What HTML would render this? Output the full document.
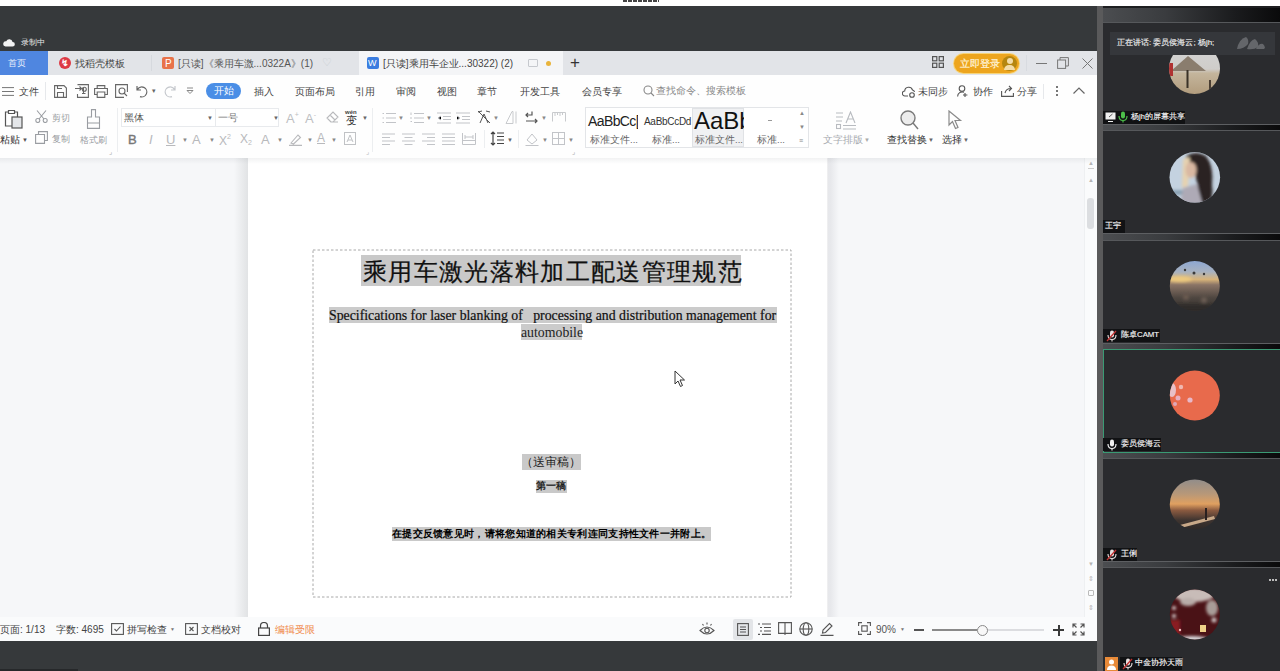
<!DOCTYPE html>
<html><head><meta charset="utf-8">
<style>
*{margin:0;padding:0;box-sizing:border-box}
html,body{width:1280px;height:671px;overflow:hidden;background:#fff;font-family:"Liberation Sans",sans-serif}
.a{position:absolute}
.t{position:absolute;white-space:nowrap;line-height:1}
#topwhite{left:0;top:0;width:1280px;height:6px;background:#fff}
#darkbar{left:0;top:6px;width:1097px;height:45px;background:#36393b}
#tabbar{left:0;top:51px;width:1097px;height:24px;background:#e2e4e8}
#menu{left:0;top:75px;width:1097px;height:29px;background:#fefefe}
#ribbon{left:0;top:104px;width:1097px;height:54px;background:#fefefe}
#docbg{left:0;top:158px;width:1085px;height:459px;background:#f6f7f9}
#page{left:248px;top:158px;width:580px;height:459px;background:#fff}
#vscroll{left:1084px;top:158px;width:13px;height:459px;background:#fafbfc;border-left:1px solid #eef0f2}
#status{left:0;top:617px;width:1097px;height:24px;background:#fafbfc}
#botbar{left:0;top:641px;width:1097px;height:30px;background:#36393b}
#side{left:1097px;top:6px;width:183px;height:665px;background:#2a2b2e}
#sidestrip{left:1097px;top:6px;width:6px;height:665px;background:#59595b}
</style></head><body>
<div class="a" id="topwhite"></div>
<div class="a" id="darkbar"></div>
<div class="a" id="tabbar"></div>
<div class="a" id="menu"></div>
<div class="a" id="ribbon"></div>
<div class="a" id="docbg"></div>
<div class="a" id="page"></div>
<div class="a" id="vscroll"></div>
<div class="a" id="status"></div>
<div class="a" id="botbar"></div>
<div class="a" style="left:0;top:669px;width:78px;height:2px;background:#26282a"></div>

<!-- top dark bar -->
<div class="a" style="left:623px;top:0px;width:36px;height:2px;background:repeating-linear-gradient(to right,#444 0 4px,#fff 4px 5px)"></div>
<svg class="a" style="left:3px;top:38px" width="12" height="9" viewBox="0 0 12 9"><path d="M2.5 8.5 H9.5 A2.3 2.3 0 0 0 9.6 3.9 A3.4 3.4 0 0 0 3.2 3.3 A2.6 2.6 0 0 0 2.5 8.5 Z" fill="#f2f2f2"/></svg>
<div class="t" style="left:21px;top:39px;font-size:8px;color:#e8e8e8">录制中</div>

<!-- tabs -->
<div class="a" style="left:0;top:51px;width:48px;height:24px;background:#4f86e0"></div>
<div class="t" style="left:8px;top:59px;font-size:9px;color:#e9f0fb">首页</div>
<div class="a" style="left:151px;top:55px;width:1px;height:16px;background:#d6d9de"></div>
<div class="a" style="left:59px;top:57px;width:12px;height:12px;border-radius:50%;background:#dd3a45"></div>
<div class="t" style="left:61px;top:59px;font-size:9px;color:#fff;font-weight:bold">&#8623;</div>
<div class="t" style="left:75px;top:59px;font-size:10px;color:#444">找稻壳模板</div>
<div class="a" style="left:162px;top:57px;width:12px;height:12px;border-radius:2px;background:#e8734a"></div>
<div class="t" style="left:165px;top:59px;font-size:10px;color:#fff">P</div>
<div class="t" style="left:178px;top:59px;font-size:10px;color:#555">[只读]《乘用车激...0322A》(1)</div>
<div class="t" style="left:322px;top:57px;font-size:11px;color:#c8ccd2">&#9825;</div>
<div class="a" style="left:359px;top:51px;width:204px;height:24px;background:#f4f5f7"></div>
<div class="a" style="left:367px;top:57px;width:12px;height:12px;border-radius:2px;background:#3b7de0"></div>
<div class="t" style="left:368px;top:59px;font-size:9px;color:#fff">W</div>
<div class="t" style="left:383px;top:59px;font-size:10px;color:#444">[只读]乘用车企业...30322) (2)</div>
<div class="a" style="left:528px;top:59px;width:10px;height:8px;border:1px solid #c6c9ce;border-radius:1px"></div>
<div class="a" style="left:546px;top:61px;width:5px;height:5px;border-radius:50%;background:#e9b43c"></div>
<div class="t" style="left:570px;top:54px;font-size:17px;color:#333">+</div>
<!-- right of tab bar -->
<svg class="a" style="left:932px;top:56px" width="12" height="12" viewBox="0 0 12 12" fill="none" stroke="#555" stroke-width="1.2"><rect x="0.6" y="0.6" width="4.2" height="4.2"/><rect x="7.2" y="0.6" width="4.2" height="4.2"/><rect x="0.6" y="7.2" width="4.2" height="4.2"/><rect x="7.2" y="7.2" width="4.2" height="4.2"/></svg>
<div class="a" style="left:954px;top:54px;width:65px;height:19px;border-radius:10px;background:#eda51e;box-shadow:0 0 0 1px #f6d47a"></div>
<div class="t" style="left:960px;top:59px;font-size:9.5px;color:#fff4da;-webkit-text-stroke:0.2px #fff4da">立即登录</div>
<div class="a" style="left:1002px;top:56px;width:15px;height:15px;border-radius:50%;background:#b5860f"></div>
<div class="a" style="left:1007px;top:58px;width:6px;height:6px;border-radius:50%;background:#f3dca8"></div>
<div class="a" style="left:1004px;top:65px;width:11px;height:5px;border-radius:5px 5px 0 0;background:#f3dca8"></div>
<div class="a" style="left:1026px;top:55px;width:1px;height:16px;background:#d8dbe0"></div>
<div class="a" style="left:1036px;top:63px;width:11px;height:1px;background:#777"></div>
<svg class="a" style="left:1057px;top:57px" width="12" height="12" viewBox="0 0 12 12" fill="none" stroke="#777" stroke-width="1"><rect x="0.6" y="3" width="8" height="8.4"/><path d="M3 3 V0.6 H11.4 V9 H8.6"/></svg>
<svg class="a" style="left:1082px;top:58px" width="11" height="11" viewBox="0 0 11 11" stroke="#777" stroke-width="1"><path d="M0.5 0.5 L10.5 10.5 M10.5 0.5 L0.5 10.5"/></svg>

<!-- menu row -->
<svg class="a" style="left:2px;top:87px" width="12" height="9" viewBox="0 0 12 9" stroke="#777" stroke-width="1"><path d="M0 0.6H12M0 4.5H12M0 8.4H12"/></svg>
<div class="t" style="left:19px;top:86.5px;font-size:10px;color:#444">文件</div>
<div class="a" style="left:45px;top:82px;width:1px;height:18px;background:#e6e8eb"></div>
<svg class="a" style="left:54px;top:85px" width="13" height="13" viewBox="0 0 13 13" fill="none" stroke="#666" stroke-width="1.1"><path d="M0.6 0.6H10L12.4 3V12.4H0.6Z M3.5 12.4V7.5H9.5V12.4 M3.5 0.6V3.5H8"/></svg>
<svg class="a" style="left:75px;top:84px" width="14" height="14" viewBox="0 0 14 14" fill="none" stroke="#666" stroke-width="1.1"><path d="M2.5 0.6H13.4V13.4H2.5V10 M0 4.5H6.5M4.5 2.5L6.5 4.5L4.5 6.5 M7 9.5H10.5M8.5 4V9"/><circle cx="9.3" cy="5.2" r="2"/></svg>
<svg class="a" style="left:94px;top:85px" width="14" height="13" viewBox="0 0 14 13" fill="none" stroke="#666" stroke-width="1.1"><path d="M3.2 3.5V0.6H10.8V3.5 M3 9.5H0.6V3.5H13.4V9.5H11 M3.2 7H10.8V12.4H3.2Z"/></svg>
<svg class="a" style="left:115px;top:84px" width="13" height="14" viewBox="0 0 13 14" fill="none" stroke="#666" stroke-width="1.1"><path d="M9 13.4H0.6V0.6H12.4V8"/><circle cx="7" cy="7" r="3"/><path d="M9 9L12 12"/></svg>
<svg class="a" style="left:136px;top:85px" width="13" height="13" viewBox="0 0 13 13" fill="none" stroke="#666" stroke-width="1.2"><path d="M1 1V5H5 M1.3 4.8A5 5 0 1 1 4 11.6"/></svg>
<div class="t" style="left:152px;top:87px;font-size:7px;color:#666">&#9662;</div>
<svg class="a" style="left:164px;top:85px" width="12" height="13" viewBox="0 0 12 13" fill="none" stroke="#c4c7cc" stroke-width="1.2"><path d="M11 1V5H7 M10.7 4.8A5 5 0 1 0 8 11.6"/></svg>
<svg class="a" style="left:186px;top:87px" width="8" height="8" viewBox="0 0 8 8" fill="none" stroke="#888" stroke-width="1"><path d="M1 1H7 M1 3.5L4 6.5L7 3.5Z"/></svg>
<div class="a" style="left:206px;top:83px;width:35px;height:16px;border-radius:8px;background:#4a8ee6"></div>
<div class="t" style="left:214px;top:86px;font-size:10px;color:#fff">开始</div>
<div class="t" style="left:254px;top:86.5px;font-size:10px;color:#444">插入</div>
<div class="t" style="left:295px;top:86.5px;font-size:9.5px;color:#444">页面布局</div>
<div class="t" style="left:355px;top:86.5px;font-size:10px;color:#444">引用</div>
<div class="t" style="left:396px;top:86.5px;font-size:10px;color:#444">审阅</div>
<div class="t" style="left:437px;top:86.5px;font-size:10px;color:#444">视图</div>
<div class="t" style="left:477px;top:86.5px;font-size:10px;color:#444">章节</div>
<div class="t" style="left:520px;top:86.5px;font-size:9.5px;color:#444">开发工具</div>
<div class="t" style="left:582px;top:86.5px;font-size:9.5px;color:#444">会员专享</div>
<svg class="a" style="left:643px;top:85px" width="12" height="12" viewBox="0 0 12 12" fill="none" stroke="#888" stroke-width="1.1"><circle cx="5" cy="5" r="4"/><path d="M8 8L11 11"/></svg>
<div class="t" style="left:656px;top:85.5px;font-size:10px;color:#888">查找命令、搜索模板</div>
<svg class="a" style="left:902px;top:85px" width="14" height="13" viewBox="0 0 14 13" fill="none" stroke="#555" stroke-width="1.1"><path d="M6 11H3A2.5 2.5 0 0 1 2.7 6A4 4 0 0 1 10.5 5A2.5 2.5 0 0 1 12.5 7"/><circle cx="10" cy="10" r="2.3"/></svg>
<div class="t" style="left:918px;top:86.5px;font-size:10px;color:#444">未同步</div>
<svg class="a" style="left:957px;top:85px" width="11" height="12" viewBox="0 0 11 12" fill="none" stroke="#555" stroke-width="1.1"><circle cx="5" cy="3.5" r="2.8"/><path d="M0.6 11.4A4.5 4.5 0 0 1 7 7.3 M8 8V12 M6 10H10.4"/></svg>
<div class="t" style="left:973px;top:86.5px;font-size:10px;color:#444">协作</div>
<svg class="a" style="left:1001px;top:85px" width="13" height="12" viewBox="0 0 13 12" fill="none" stroke="#555" stroke-width="1.1"><path d="M0.6 6V11.4H12.4V8 M4 8A6 6 0 0 1 10 3.5 M8 1L10.5 3.5L8 6"/></svg>
<div class="t" style="left:1017px;top:86.5px;font-size:10px;color:#444">分享</div>
<div class="a" style="left:1043px;top:84px;width:1px;height:15px;background:#e6e8eb"></div>
<div class="a" style="left:1056px;top:86px;width:2px;height:2px;background:#777"></div>
<div class="a" style="left:1056px;top:90px;width:2px;height:2px;background:#777"></div>
<div class="a" style="left:1056px;top:94px;width:2px;height:2px;background:#777"></div>
<svg class="a" style="left:1073px;top:87px" width="12" height="7" viewBox="0 0 12 7" fill="none" stroke="#666" stroke-width="1.2"><path d="M0.5 6.5L6 1L11.5 6.5"/></svg>

<!-- ribbon: clipboard -->
<svg class="a" style="left:4px;top:109px" width="19" height="20" viewBox="0 0 19 20" fill="none" stroke="#555" stroke-width="1.2"><path d="M4 3H1.5V17H8 M11 3H13.5V8 M4.5 1.5H10.5V4.5H4.5Z"/><rect x="8" y="8" width="10" height="11" fill="#e4e6e9"/></svg>
<div class="t" style="left:0px;top:135px;font-size:10px;color:#333">粘贴</div>
<div class="t" style="left:22px;top:137px;font-size:6px;color:#555">&#9660;</div>
<svg class="a" style="left:35px;top:110px" width="13" height="13" viewBox="0 0 13 13" fill="none" stroke="#9a9da2" stroke-width="1.1"><path d="M2 0.5L9 9 M11 0.5L4 9"/><circle cx="2.8" cy="10.5" r="2"/><circle cx="10.2" cy="10.5" r="2"/></svg>
<div class="t" style="left:52px;top:114px;font-size:9px;color:#9a9da2">剪切</div>
<svg class="a" style="left:35px;top:131px" width="13" height="13" viewBox="0 0 13 13" fill="none" stroke="#9a9da2" stroke-width="1.1"><path d="M3.5 3.5V0.6H12.4V9.5H9.5 M0.6 3.5H9.5V12.4H0.6Z"/></svg>
<div class="t" style="left:52px;top:135px;font-size:9px;color:#9a9da2">复制</div>
<svg class="a" style="left:86px;top:109px" width="15" height="20" viewBox="0 0 15 20" fill="none" stroke="#9a9da2" stroke-width="1.1"><path d="M5.5 0.6H9.5V8H13.5V19.4H1.5V8H5.5Z M1.5 14H13.5"/></svg>
<div class="t" style="left:80px;top:136px;font-size:9px;color:#9a9da2">格式刷</div>
<div class="t" style="left:109px;top:148px;font-size:7px;color:#aaa">&#8991;</div>
<div class="a" style="left:117px;top:108px;width:1px;height:44px;background:#eceef0"></div>
<!-- font -->
<div class="a" style="left:121px;top:108px;width:158px;height:19px;border:1px solid #e8eaed;background:#fff"></div>
<div class="a" style="left:215px;top:109px;width:1px;height:17px;background:#e8eaed"></div>
<div class="t" style="left:124px;top:113px;font-size:9.5px;color:#555">黑体</div>
<div class="t" style="left:207px;top:115px;font-size:6px;color:#666">&#9660;</div>
<div class="t" style="left:218px;top:113px;font-size:9.5px;color:#777">一号</div>
<div class="t" style="left:273px;top:115px;font-size:6px;color:#666">&#9660;</div>
<div class="t" style="left:286px;top:111px;font-size:13px;color:#bdbfc3;font-family:'Liberation Sans'">A<span style="font-size:7px;vertical-align:6px">+</span></div>
<div class="t" style="left:305px;top:111px;font-size:13px;color:#bdbfc3">A<span style="font-size:7px;vertical-align:6px">-</span></div>
<svg class="a" style="left:326px;top:111px" width="13" height="12" viewBox="0 0 13 12" fill="none" stroke="#b8b9bc" stroke-width="1.1"><path d="M4.5 11H12 M5 11L1 7L7 1L12 6L7 11Z M4 4L9 9"/></svg>
<div class="t" style="left:345px;top:109px;font-size:6px;color:#444;font-weight:bold">wén</div>
<div class="t" style="left:346px;top:115px;font-size:11px;color:#333">变</div>
<div class="t" style="left:362px;top:115px;font-size:6px;color:#666">&#9660;</div>
<div class="t" style="left:128px;top:133px;font-size:13px;color:#777;-webkit-text-stroke:0.4px #777">B</div>
<div class="t" style="left:149px;top:133px;font-size:13px;color:#b8b9bc;font-style:italic">I</div>
<div class="t" style="left:166px;top:133px;font-size:13px;color:#b8b9bc;text-decoration:underline">U</div>
<div class="t" style="left:182px;top:137px;font-size:6px;color:#888">&#9660;</div>
<div class="t" style="left:192px;top:133px;font-size:13px;color:#b8b9bc">A</div>
<div class="t" style="left:209px;top:137px;font-size:6px;color:#888">&#9660;</div>
<div class="t" style="left:219px;top:133px;font-size:12px;color:#b8b9bc">X<span style="font-size:7px;vertical-align:6px">2</span></div>
<div class="t" style="left:240px;top:133px;font-size:12px;color:#b8b9bc">X<span style="font-size:7px;vertical-align:-2px">2</span></div>
<div class="t" style="left:261px;top:133px;font-size:13px;color:#b8b9bc">A</div>
<div class="t" style="left:277px;top:137px;font-size:6px;color:#888">&#9660;</div>
<svg class="a" style="left:288px;top:133px" width="15" height="13" viewBox="0 0 15 13" fill="none" stroke="#b8b9bc" stroke-width="1.1"><path d="M1 12.4H14 M3 10L10 2L12.5 4.5L5.5 11Z"/></svg>
<div class="t" style="left:307px;top:137px;font-size:6px;color:#888">&#9660;</div>
<div class="t" style="left:317px;top:132px;font-size:12px;color:#b8b9bc;text-decoration:underline">A</div>
<div class="t" style="left:331px;top:137px;font-size:6px;color:#888">&#9660;</div>
<svg class="a" style="left:344px;top:132px" width="12" height="13" viewBox="0 0 12 13" fill="none" stroke="#c0c2c5" stroke-width="1"><rect x="0.5" y="0.5" width="11" height="12"/><path d="M3 10L6 3L9 10 M4 8H8"/></svg>
<div class="t" style="left:366px;top:148px;font-size:7px;color:#b8b9bc">&#8991;</div>
<div class="a" style="left:372px;top:108px;width:1px;height:44px;background:#eceef0"></div>
<!-- paragraph -->
<svg class="a" style="left:382px;top:112px" width="14" height="12" viewBox="0 0 14 12" stroke="#c2c4c8" stroke-width="1"><path d="M4 1.5H14M4 6H14M4 10.5H14 M0.5 1.5H2M0.5 6H2M0.5 10.5H2"/></svg>
<div class="t" style="left:398px;top:115px;font-size:6px;color:#888">&#9660;</div>
<svg class="a" style="left:410px;top:112px" width="14" height="12" viewBox="0 0 14 12" stroke="#c2c4c8" stroke-width="1"><path d="M4 1.5H14M4 6H14M4 10.5H14 M1 0.5V3M1 5V7M0.5 9.5H2"/></svg>
<div class="t" style="left:426px;top:115px;font-size:6px;color:#888">&#9660;</div>
<svg class="a" style="left:437px;top:112px" width="14" height="12" viewBox="0 0 14 12" stroke="#c2c4c8" stroke-width="1"><path d="M0 1H14M6 4.5H14M6 7.5H14M0 11H14 M4 4L1 6L4 8"/></svg>
<svg class="a" style="left:456px;top:112px" width="14" height="12" viewBox="0 0 14 12" stroke="#c2c4c8" stroke-width="1"><path d="M0 1H14M6 4.5H14M6 7.5H14M0 11H14 M1 4L4 6L1 8"/></svg>
<svg class="a" style="left:477px;top:110px" width="14" height="14" viewBox="0 0 14 14" fill="none" stroke="#555" stroke-width="1.2"><path d="M1 2L5 1 M13 2L9 1 M3 13L7 4L11 13 M1 1L13 13" stroke-width="1"/></svg>
<div class="t" style="left:493px;top:115px;font-size:6px;color:#888">&#9660;</div>
<svg class="a" style="left:505px;top:111px" width="13" height="13" viewBox="0 0 13 13" fill="none" stroke="#c8cacd" stroke-width="1"><path d="M1 12.5L7 0.5H8V12.5Z M11 0.5V12.5"/></svg>
<svg class="a" style="left:525px;top:111px" width="13" height="13" viewBox="0 0 13 13" fill="none" stroke="#555" stroke-width="1.2"><path d="M7 0.5V4H1 M3 2L1 4L3 6 M1 10H12 M10 8L12 10L10 12"/></svg>
<div class="t" style="left:541px;top:115px;font-size:6px;color:#888">&#9660;</div>
<svg class="a" style="left:552px;top:112px" width="14" height="10" viewBox="0 0 14 10" fill="none" stroke="#c8cacd" stroke-width="1"><path d="M0.5 0.5H13.5 M0.5 0.5V9.5 M13.5 0.5V9.5 M3 0.5V4 M5.5 0.5V3 M8 0.5V4 M10.5 0.5V3"/></svg>
<svg class="a" style="left:382px;top:133px" width="13" height="12" viewBox="0 0 13 12" stroke="#c2c4c8" stroke-width="1"><path d="M0 1H13M0 4.5H8M0 8H13M0 11.5H8"/></svg>
<svg class="a" style="left:402px;top:133px" width="13" height="12" viewBox="0 0 13 12" stroke="#c2c4c8" stroke-width="1"><path d="M0 1H13M2.5 4.5H10.5M0 8H13M2.5 11.5H10.5"/></svg>
<svg class="a" style="left:422px;top:133px" width="13" height="12" viewBox="0 0 13 12" stroke="#c2c4c8" stroke-width="1"><path d="M0 1H13M5 4.5H13M0 8H13M5 11.5H13"/></svg>
<svg class="a" style="left:442px;top:133px" width="13" height="12" viewBox="0 0 13 12" stroke="#c2c4c8" stroke-width="1"><path d="M0 1H13M0 4.5H13M0 8H13M0 11.5H13"/></svg>
<svg class="a" style="left:462px;top:133px" width="14" height="12" viewBox="0 0 14 12" fill="none" stroke="#c2c4c8" stroke-width="1"><path d="M0.5 0V11.5H13.5V0 M3 2V6M11 2V6 M3 4H11 M0.5 7.5H13.5"/></svg>
<div class="a" style="left:484px;top:130px;width:1px;height:18px;background:#eceef0"></div>
<svg class="a" style="left:490px;top:131px" width="14" height="15" viewBox="0 0 14 15" fill="none" stroke="#444" stroke-width="1.2"><path d="M3 1V14 M1 3L3 1L5 3 M1 12L3 14L5 12 M7 2H14M7 5.5H14M7 9H14M7 12.5H14"/></svg>
<div class="t" style="left:507px;top:137px;font-size:6px;color:#666">&#9660;</div>
<div class="a" style="left:518px;top:130px;width:1px;height:18px;background:#eceef0"></div>
<svg class="a" style="left:525px;top:132px" width="14" height="14" viewBox="0 0 14 14" fill="none" stroke="#c2c4c8" stroke-width="1"><path d="M2 8L7 2L12 8L7 12Z M0.5 13.5H13.5"/></svg>
<div class="t" style="left:542px;top:137px;font-size:6px;color:#888">&#9660;</div>
<svg class="a" style="left:552px;top:132px" width="13" height="13" viewBox="0 0 13 13" fill="none" stroke="#c2c4c8" stroke-width="1"><rect x="0.5" y="0.5" width="12" height="12"/><path d="M6.5 0.5V12.5M0.5 6.5H12.5"/></svg>
<div class="t" style="left:568px;top:137px;font-size:6px;color:#888">&#9660;</div>
<div class="t" style="left:572px;top:148px;font-size:7px;color:#aaa">&#8991;</div>
<!-- style gallery -->
<div class="a" style="left:585px;top:107px;width:224px;height:41px;border:1px solid #e3e5e8;background:#fff"></div>
<div class="a" style="left:692px;top:108px;width:52px;height:39px;background:#f0f1f3;border:1px solid #e0e2e5"></div>
<div class="a" style="left:586px;top:110px;width:52px;height:22px;overflow:hidden"><div class="t" style="left:2px;top:4px;font-size:14px;color:#222;letter-spacing:-0.6px">AaBbCc[</div></div>
<div class="t" style="left:590px;top:135px;font-size:9.5px;color:#666">标准文件...</div>
<div class="t" style="left:644px;top:117px;font-size:10px;color:#333;letter-spacing:-0.3px">AaBbCcDd</div>
<div class="t" style="left:652px;top:135px;font-size:9.5px;color:#666">标准...</div>
<div class="a" style="left:693px;top:109px;width:51px;height:24px;overflow:hidden"><div class="t" style="left:1px;top:0px;font-size:24px;color:#111">AaBb</div></div>
<div class="t" style="left:695px;top:135px;font-size:9.5px;color:#666">标准文件...</div>
<div class="a" style="left:768px;top:120px;width:4px;height:1px;background:#999"></div>
<div class="t" style="left:757px;top:135px;font-size:9.5px;color:#666">标准...</div>
<div class="t" style="left:799px;top:110px;font-size:6px;color:#888">&#9650;</div>
<div class="t" style="left:799px;top:124px;font-size:6px;color:#888">&#9660;</div>
<div class="t" style="left:799px;top:137px;font-size:7px;color:#888">&#8801;</div>
<!-- right tools -->
<svg class="a" style="left:836px;top:111px" width="20" height="19" viewBox="0 0 20 19" fill="none" stroke="#b8bbc0" stroke-width="1.1"><path d="M0 2H7M0 6H7M0 10H6 M10 12L14.5 1L19 12 M11.5 8H17.5 M7 14.5H20M7 18H20"/><rect x="0.5" y="13.5" width="4" height="4"/></svg>
<div class="t" style="left:823px;top:135px;font-size:10px;color:#a6a9ae">文字排版</div>
<div class="t" style="left:864px;top:137px;font-size:6px;color:#aaa">&#9660;</div>
<svg class="a" style="left:900px;top:110px" width="19" height="20" viewBox="0 0 19 20" fill="none" stroke="#7a7a7a" stroke-width="1.4"><circle cx="8" cy="8" r="7" fill="#ececec"/><path d="M13 13L18 19"/></svg>
<div class="t" style="left:887px;top:135px;font-size:10px;color:#333">查找替换</div>
<div class="t" style="left:928px;top:137px;font-size:6px;color:#666">&#9660;</div>
<svg class="a" style="left:948px;top:110px" width="15" height="20" viewBox="0 0 15 20" fill="none" stroke="#8a8a8a" stroke-width="1.2"><path d="M1 1V15L4.5 11.5L7.5 18.5L10 17.5L7 10.5H12.5Z"/></svg>
<div class="t" style="left:942px;top:135px;font-size:10px;color:#333">选择</div>
<div class="t" style="left:963px;top:137px;font-size:6px;color:#666">&#9660;</div>

<!-- document -->
<div class="a" style="left:234px;top:158px;width:14px;height:459px;background:linear-gradient(to right,rgba(40,50,50,0) 0%,rgba(40,50,50,0.05) 50%,rgba(40,50,50,0.1) 100%)"></div>
<div class="a" style="left:827px;top:158px;width:12px;height:459px;background:linear-gradient(to left,rgba(40,40,60,0) 0%,rgba(40,40,60,0.07) 70%,rgba(40,40,60,0.08) 100%)"></div>
<svg class="a" style="left:312px;top:249px" width="480" height="349"><rect x="1" y="1" width="478" height="347" fill="none" stroke="#a8a8a8" stroke-width="1" stroke-dasharray="2.5 2"/></svg>
<div class="a" style="left:361px;top:255px;width:380px;height:31px;background:#c9c9c9"></div>
<div class="t" style="left:363px;top:260px;font-size:24px;letter-spacing:1.33px;color:#111;-webkit-text-stroke:0.25px #111;font-family:'Liberation Sans',sans-serif">乘用车激光落料加工配送管理规范</div>
<div class="a" style="left:329px;top:307px;width:448px;height:16px;background:#cbcbcb"></div>
<div class="a" style="left:521px;top:324px;width:61px;height:16px;background:#cbcbcb"></div>
<div class="t" style="left:329px;top:309px;font-size:13.8px;color:#111;-webkit-text-stroke:0.2px #111;font-family:'Liberation Serif',serif;white-space:pre">Specifications for laser blanking of   processing and distribution management for</div>
<div class="t" style="left:521px;top:326px;font-size:13.8px;color:#222;font-family:'Liberation Serif',serif">automobile</div>
<div class="a" style="left:522px;top:454px;width:59px;height:16px;background:#c9c9c9"></div>
<div class="t" style="left:521px;top:456px;font-size:12px;color:#222">（送审稿）</div>
<div class="a" style="left:536px;top:480px;width:31px;height:13px;background:#c9c9c9"></div>
<div class="t" style="left:536px;top:481px;font-size:10px;color:#111;-webkit-text-stroke:0.3px #111;font-family:'Liberation Serif',serif">第一稿</div>
<div class="a" style="left:392px;top:527px;width:319px;height:14px;background:#c9c9c9"></div>
<div class="t" style="left:392px;top:529px;font-size:10px;letter-spacing:0.3px;color:#000;font-weight:bold;font-family:'Liberation Serif',serif">在提交反馈意见时，请将您知道的相关专利连同支持性文件一并附上。</div>
<svg class="a" style="left:674px;top:370px" width="12" height="18" viewBox="0 0 12 18"><path d="M1 1V14L4 11L6.5 16.5L8.5 15.5L6 10H10.5Z" fill="#fff" stroke="#333" stroke-width="1"/></svg>
<div class="a" style="left:0;top:158px;width:1097px;height:6px;background:linear-gradient(to bottom,rgba(60,70,80,0.07),rgba(60,70,80,0))"></div>
<!-- vertical scrollbar -->
<div class="t" style="left:1088px;top:160px;font-size:6px;color:#b5b5b5">&#9650;</div>
<div class="a" style="left:1088px;top:168px;width:6px;height:1px;background:#ccc"></div>
<div class="t" style="left:1088px;top:177px;font-size:6px;color:#b5b5b5">&#9650;</div>
<div class="a" style="left:1087px;top:198px;width:7px;height:31px;border-radius:3px;background:#dcdee1"></div>
<div class="t" style="left:1088px;top:561px;font-size:6px;color:#b5b5b5">&#9660;</div>
<div class="t" style="left:1088px;top:575px;font-size:7px;color:#b5b5b5">&#8661;</div>
<div class="a" style="left:1088px;top:590px;width:6px;height:6px;border:1px solid #bbb;border-radius:1px"></div>
<div class="t" style="left:1088px;top:604px;font-size:7px;color:#b5b5b5">&#8661;</div>

<!-- status bar -->
<div class="t" style="left:0px;top:625px;font-size:10px;color:#444">页面: 1/13</div>
<div class="t" style="left:56px;top:625px;font-size:10px;color:#444">字数: 4695</div>
<svg class="a" style="left:111px;top:623px" width="13" height="12" viewBox="0 0 13 12" fill="none" stroke="#555" stroke-width="1.1"><rect x="0.6" y="0.6" width="11.8" height="10.8"/><path d="M3.5 6L5.5 8L9.5 3.5"/></svg>
<div class="t" style="left:127px;top:625px;font-size:9.5px;color:#444">拼写检查</div>
<div class="t" style="left:170px;top:627px;font-size:5px;color:#777">&#9660;</div>
<svg class="a" style="left:185px;top:623px" width="13" height="12" viewBox="0 0 13 12" fill="none" stroke="#555" stroke-width="1.1"><rect x="0.6" y="0.6" width="11.8" height="10.8"/><path d="M4.5 4L8.5 8M8.5 4L4.5 8"/></svg>
<div class="t" style="left:201px;top:625px;font-size:9.5px;color:#444">文档校对</div>
<svg class="a" style="left:258px;top:622px" width="12" height="14" viewBox="0 0 12 14" fill="none" stroke="#444" stroke-width="1.2"><path d="M2.5 6V4A3.5 3.5 0 0 1 9.5 4V6"/><rect x="0.6" y="6" width="10.8" height="7.4"/></svg>
<div class="t" style="left:275px;top:625px;font-size:9.5px;color:#f08a4b">编辑受限</div>
<svg class="a" style="left:699px;top:622px" width="16" height="14" viewBox="0 0 16 14" fill="none" stroke="#555" stroke-width="1.1"><path d="M1 8.5Q8 1.5 15 8.5Q8 15.5 1 8.5Z"/><circle cx="8" cy="8.5" r="2.2"/><path d="M8 0.5V2.5M3.5 2L4.5 3.5M12.5 2L11.5 3.5"/></svg>
<div class="a" style="left:733px;top:619px;width:20px;height:21px;background:#e3e5e8;border-radius:2px"></div>
<svg class="a" style="left:737px;top:623px" width="12" height="13" viewBox="0 0 12 13" fill="none" stroke="#555" stroke-width="1.1"><rect x="0.6" y="0.6" width="10.8" height="11.8"/><path d="M3 4H9M3 6.5H9M3 9H9"/></svg>
<svg class="a" style="left:758px;top:623px" width="13" height="12" viewBox="0 0 13 12" fill="none" stroke="#555" stroke-width="1.1"><path d="M0 1H2M4 1H13 M2 4.5H4M6 4.5H13 M2 8H4M6 8H13 M0 11.4H2M4 11.4H13"/></svg>
<svg class="a" style="left:778px;top:622px" width="14" height="13" viewBox="0 0 14 13" fill="none" stroke="#555" stroke-width="1.1"><path d="M0.6 0.6H7V11.4H0.6Z M7 0.6H13.4V11.4H7 M7 11.4V13"/></svg>
<svg class="a" style="left:799px;top:622px" width="14" height="14" viewBox="0 0 14 14" fill="none" stroke="#555" stroke-width="1.1"><circle cx="7" cy="7" r="6.2"/><ellipse cx="7" cy="7" rx="2.8" ry="6.2"/><path d="M0.8 7H13.2"/></svg>
<svg class="a" style="left:820px;top:622px" width="14" height="14" viewBox="0 0 14 14" fill="none" stroke="#555" stroke-width="1.1"><path d="M0.5 13.4H13.5 M2.5 11L3 8L9.5 1.5L12 4L5.5 10.5Z"/></svg>
<svg class="a" style="left:858px;top:622px" width="13" height="13" viewBox="0 0 13 13" fill="none" stroke="#555" stroke-width="1.1"><path d="M0.6 4V0.6H4 M9 0.6H12.4V4 M12.4 9V12.4H9 M4 12.4H0.6V9"/><rect x="3.8" y="3.8" width="5.4" height="5.4"/></svg>
<div class="t" style="left:876px;top:625px;font-size:10px;color:#555">90%</div>
<div class="t" style="left:900px;top:627px;font-size:5px;color:#777">&#9660;</div>
<div class="a" style="left:914px;top:629px;width:10px;height:2px;background:#555"></div>
<div class="a" style="left:932px;top:629px;width:112px;height:1.5px;background:#dcdde0"></div>
<div class="a" style="left:932px;top:629px;width:45px;height:1.5px;background:#8a8a8a"></div>
<div class="a" style="left:976.5px;top:624.5px;width:11px;height:11px;border-radius:50%;border:1.5px solid #8a8a8a;background:#f8f8f8"></div>
<div class="a" style="left:1053px;top:629px;width:11px;height:2px;background:#3a3a3a"></div>
<div class="a" style="left:1057.5px;top:624.5px;width:2px;height:11px;background:#3a3a3a"></div>
<svg class="a" style="left:1072px;top:623px" width="13" height="13" viewBox="0 0 13 13" fill="none" stroke="#555" stroke-width="1.2"><path d="M1 4.5V1H4.5M1 1L4.5 4.5 M8.5 1H12V4.5M12 1L8.5 4.5 M12 8.5V12H8.5M12 12L8.5 8.5 M4.5 12H1V8.5M1 12L4.5 8.5"/></svg>
<!-- sidebar -->
<div class="a" style="left:1097px;top:6px;width:183px;height:665px;background:#2a2b2e"></div>
<div class="a" style="left:1103px;top:6px;width:177px;height:17px;background:linear-gradient(to right,#4b4d50 0%,#3a3c3f 35%,#1a1b1d 75%,#0a0a0b 100%);border-top:2px solid #1e1f21;border-bottom:1px solid #56585b"></div>
<div class="a" style="left:1103px;top:124px;width:177px;height:7px;background:linear-gradient(to right,#4b4d50 0%,#3a3c3f 35%,#1a1b1d 75%,#0a0a0b 100%);border-top:1px solid #5d5f62;border-bottom:1px solid #56585b"></div>
<div class="a" style="left:1103px;top:233px;width:177px;height:8px;background:linear-gradient(to right,#4b4d50 0%,#3a3c3f 35%,#1a1b1d 75%,#0a0a0b 100%);border-top:1px solid #5d5f62;border-bottom:1px solid #56585b"></div>
<div class="a" style="left:1103px;top:343px;width:177px;height:7px;background:linear-gradient(to right,#4b4d50 0%,#3a3c3f 35%,#1a1b1d 75%,#0a0a0b 100%);border-top:1px solid #5d5f62;border-bottom:1px solid #56585b"></div>
<div class="a" style="left:1103px;top:452px;width:177px;height:7px;background:linear-gradient(to right,#4b4d50 0%,#3a3c3f 35%,#1a1b1d 75%,#0a0a0b 100%);border-top:1px solid #5d5f62;border-bottom:1px solid #56585b"></div>
<div class="a" style="left:1103px;top:561px;width:177px;height:7px;background:linear-gradient(to right,#4b4d50 0%,#3a3c3f 35%,#1a1b1d 75%,#0a0a0b 100%);border-top:1px solid #5d5f62;border-bottom:1px solid #56585b"></div>
<div class="a" style="left:1097px;top:6px;width:6px;height:665px;background:#5a5a5b"></div>
<div class="a" style="left:1103px;top:349px;width:177px;height:104px;border:1px solid #3a9a74;border-right:none"></div>
<svg class="a" style="left:1097px;top:6px" width="183" height="665" viewBox="1097 6 183 665">
<defs>
<clipPath id="c1"><circle cx="1194.5" cy="68.5" r="25.5"/></clipPath>
<clipPath id="c2"><circle cx="1194.8" cy="177.3" r="25.3"/></clipPath>
<clipPath id="c3"><circle cx="1194.8" cy="286" r="25"/></clipPath>
<clipPath id="c4"><circle cx="1194.8" cy="395.5" r="25"/></clipPath>
<clipPath id="c5"><circle cx="1194.8" cy="504.4" r="25"/></clipPath>
<clipPath id="c6"><circle cx="1194.8" cy="614.5" r="25"/></clipPath>
<filter id="bl" x="-30%" y="-30%" width="160%" height="160%"><feGaussianBlur stdDeviation="1.4"/></filter>
<filter id="bl2" x="-20%" y="-20%" width="140%" height="140%"><feGaussianBlur stdDeviation="0.7"/></filter>
<linearGradient id="g1" x1="0" y1="0" x2="0" y2="1"><stop offset="0" stop-color="#d4d5d5"/><stop offset="0.5" stop-color="#cfcdca"/><stop offset="0.58" stop-color="#c4b59c"/><stop offset="1" stop-color="#b09a7a"/></linearGradient>
<linearGradient id="g3" x1="0" y1="0" x2="0" y2="1"><stop offset="0" stop-color="#8aa6d4"/><stop offset="0.22" stop-color="#a8b2c0"/><stop offset="0.36" stop-color="#d8b47a"/><stop offset="0.46" stop-color="#8a7466"/><stop offset="0.7" stop-color="#4e4640"/><stop offset="1" stop-color="#2a2624"/></linearGradient>
<linearGradient id="g5" x1="0" y1="0" x2="0" y2="1"><stop offset="0" stop-color="#8e8c8c"/><stop offset="0.3" stop-color="#b89878"/><stop offset="0.48" stop-color="#e0a060"/><stop offset="0.6" stop-color="#8a5a40"/><stop offset="0.78" stop-color="#3e3430"/><stop offset="1" stop-color="#2a2624"/></linearGradient>
</defs>
<g clip-path="url(#c1)"><rect x="1168" y="42" width="54" height="54" fill="url(#g1)"/><path d="M1171 71 L1188 56 L1206 71 Z" fill="#8a7d6e" filter="url(#bl2)"/><rect x="1186.5" y="70" width="2" height="18" fill="#3a3028" filter="url(#bl2)"/><rect x="1168" y="63" width="5" height="13" fill="#b03030" filter="url(#bl2)"/><rect x="1209" y="80" width="2" height="10" fill="#4a3c30" filter="url(#bl2)"/></g>
<g clip-path="url(#c2)"><rect x="1168" y="151" width="54" height="54" fill="#c4d2e0"/><g filter="url(#bl)"><rect x="1168" y="190" width="18" height="5" fill="#8aa2b4"/><path d="M1186 156 Q1196 150 1206 156 Q1214 166 1212 185 Q1214 198 1208 206 L1196 206 Q1200 190 1196 178 Q1194 165 1186 162 Z" fill="#2c2020"/><path d="M1183 160 Q1186 156 1190 158 L1188 186 L1182 188 Z" fill="#e6d2b0"/><ellipse cx="1191" cy="170" rx="5.5" ry="8" fill="#d9b8a2"/><path d="M1183 188 L1197 184 L1203 206 L1180 206 Z" fill="#aeaab6"/></g></g>
<g clip-path="url(#c3)"><rect x="1168" y="260" width="54" height="54" fill="url(#g3)"/><g filter="url(#bl)"><ellipse cx="1180" cy="279" rx="12" ry="3" fill="#f0cc80" opacity="0.9"/><circle cx="1186" cy="297" r="3" fill="#6a5a50"/><circle cx="1204" cy="300" r="3" fill="#6a5c52"/><rect x="1176" y="304" width="36" height="6" fill="#222" opacity="0.5"/></g><circle cx="1185" cy="270" r="1.2" fill="#3a3a3a"/><circle cx="1194" cy="273" r="1.5" fill="#3a3a3a"/><circle cx="1204" cy="274" r="1.2" fill="#3a3a3a"/></g>
<g clip-path="url(#c4)"><rect x="1168" y="369" width="54" height="54" fill="#e86a4c"/><g filter="url(#bl2)"><ellipse cx="1172" cy="390" rx="4" ry="7" fill="#e8c0c8"/><circle cx="1181" cy="387" r="2.2" fill="#f0b8b0"/><circle cx="1178" cy="398" r="2.5" fill="#e8b0c0"/><circle cx="1190" cy="400" r="2.6" fill="#e8b8c8"/><circle cx="1175" cy="404" r="2" fill="#e0a8b8"/></g></g>
<g clip-path="url(#c5)"><rect x="1168" y="478" width="54" height="54" fill="url(#g5)"/><path d="M1180 525 L1214 516 L1215 519 L1181 528Z" fill="#c8a888" filter="url(#bl2)"/><rect x="1205" y="508" width="2" height="12" fill="#2a2020"/></g>
<g clip-path="url(#c6)"><rect x="1168" y="588" width="54" height="54" fill="#4a1216"/><g filter="url(#bl)"><ellipse cx="1194" cy="595" rx="20" ry="7" fill="#c8bcb8"/><ellipse cx="1188" cy="602" rx="8" ry="4" fill="#b8aca8"/><ellipse cx="1212" cy="608" rx="6" ry="8" fill="#a89c98"/><circle cx="1174" cy="608" r="2" fill="#d8d0d0"/><circle cx="1174" cy="616" r="2" fill="#d8d0d0"/><circle cx="1214" cy="620" r="2.5" fill="#d0c8c8"/><rect x="1170" y="620" width="10" height="16" fill="#8a1c20"/><ellipse cx="1192" cy="639" rx="16" ry="3" fill="#d8d4d8"/></g><rect x="1200" y="625" width="6" height="7" fill="#f0d088" filter="url(#bl2)"/><circle cx="1180" cy="630" r="1.2" fill="#f0c0c0"/></g>
</svg>
<div class="a" style="left:1110px;top:32px;width:165px;height:23px;background:#35373b"></div>
<div class="t" style="left:1117px;top:39px;font-size:8px;color:#ededed;-webkit-text-stroke:0.15px #ededed">正在讲话: 委员侯海云; 杨jh;</div>
<svg class="a" style="left:1236px;top:35px" width="30" height="16" viewBox="0 0 30 16"><g fill="#6a6c70" opacity="0.9"><path d="M1 14 Q3 4 10 2 Q13 4 12 9 Q8 14 1 14Z"/><path d="M11 14 Q14 5 19 4 Q23 7 22 12 Q18 15 11 14Z"/><path d="M20 14 Q23 8 27 9 Q30 12 28 14Z"/></g></svg>
<div class="a" style="left:1103px;top:111px;width:82px;height:13px;background:#111214"></div>
<svg class="a" style="left:1105px;top:112px" width="11" height="10" viewBox="0 0 11 10"><rect x="0.5" y="0.5" width="10" height="7" fill="#f0f0f0"/><path d="M3 9.5H8" stroke="#f0f0f0"/><path d="M4 5 L7.5 2" stroke="#333" stroke-width="0.8"/></svg>
<svg class="a" style="left:1118px;top:111px" width="10" height="12" viewBox="0 0 10 12"><rect x="3" y="0.5" width="4" height="7" rx="2" fill="#4cc04a"/><path d="M1 5 Q1 9.5 5 9.5 Q9 9.5 9 5 M5 9.5V11.5" stroke="#4cc04a" fill="none" stroke-width="1.2"/></svg>
<div class="t" style="left:1131px;top:113px;font-size:7.5px;color:#f4f4f4;-webkit-text-stroke:0.15px #f4f4f4">杨jh的屏幕共享</div>
<div class="a" style="left:1103px;top:220px;width:22px;height:13px;background:#111214"></div>
<div class="t" style="left:1105px;top:222px;font-size:8px;color:#f4f4f4;-webkit-text-stroke:0.15px #f4f4f4">王宇</div>
<div class="a" style="left:1103px;top:329px;width:57px;height:13px;background:#111214"></div>
<svg class="a" style="left:1106px;top:330px" width="11" height="12" viewBox="0 0 11 12"><rect x="4" y="0.5" width="4" height="7" rx="2" fill="#e8e0e0"/><path d="M2 5 Q2 9.5 6 9.5 Q10 9.5 10 5 M6 9.5V11.5" stroke="#e8e0e0" fill="none" stroke-width="1.1"/><path d="M1 11 L10 1" stroke="#c03030" stroke-width="1.3"/></svg>
<div class="t" style="left:1121px;top:331px;font-size:7.8px;color:#f4f4f4;-webkit-text-stroke:0.15px #f4f4f4">陈卓CAMT</div>
<div class="a" style="left:1103px;top:438px;width:58px;height:13px;background:#111214"></div>
<svg class="a" style="left:1107px;top:439px" width="10" height="12" viewBox="0 0 10 12"><rect x="3" y="0.5" width="4" height="7" rx="2" fill="#f0f0f0"/><path d="M1 5 Q1 9.5 5 9.5 Q9 9.5 9 5 M5 9.5V11.5" stroke="#f0f0f0" fill="none" stroke-width="1.2"/></svg>
<div class="t" style="left:1121px;top:440px;font-size:7.5px;color:#f4f4f4;-webkit-text-stroke:0.15px #f4f4f4">委员侯海云</div>
<div class="a" style="left:1103px;top:548px;width:34px;height:13px;background:#111214"></div>
<svg class="a" style="left:1106px;top:549px" width="11" height="12" viewBox="0 0 11 12"><rect x="4" y="0.5" width="4" height="7" rx="2" fill="#e8e0e0"/><path d="M2 5 Q2 9.5 6 9.5 Q10 9.5 10 5 M6 9.5V11.5" stroke="#e8e0e0" fill="none" stroke-width="1.1"/><path d="M1 11 L10 1" stroke="#c03030" stroke-width="1.3"/></svg>
<div class="t" style="left:1121px;top:550px;font-size:8px;color:#f4f4f4;-webkit-text-stroke:0.15px #f4f4f4">王俐</div>
<div class="a" style="left:1269px;top:579px;width:2px;height:2px;background:#bbb"></div><div class="a" style="left:1272px;top:579px;width:2px;height:2px;background:#bbb"></div><div class="a" style="left:1275px;top:579px;width:2px;height:2px;background:#bbb"></div>
<div class="a" style="left:1105px;top:657px;width:13px;height:14px;background:#e88a38"></div>
<svg class="a" style="left:1106px;top:658px" width="11" height="13" viewBox="0 0 11 13"><circle cx="5.5" cy="4" r="2.5" fill="#fff"/><path d="M1 12 Q1 7.5 5.5 7.5 Q10 7.5 10 12Z" fill="#fff"/></svg>
<div class="a" style="left:1120px;top:657px;width:62px;height:13px;background:#111214"></div>
<svg class="a" style="left:1122px;top:658px" width="11" height="12" viewBox="0 0 11 12"><rect x="4" y="0.5" width="4" height="7" rx="2" fill="#e8e0e0"/><path d="M2 5 Q2 9.5 6 9.5 Q10 9.5 10 5 M6 9.5V11.5" stroke="#e8e0e0" fill="none" stroke-width="1.1"/><path d="M1 11 L10 1" stroke="#c03030" stroke-width="1.3"/></svg>
<div class="t" style="left:1135px;top:659px;font-size:7.5px;color:#f4f4f4;-webkit-text-stroke:0.15px #f4f4f4">中金协孙天雨</div>
</body></html>
